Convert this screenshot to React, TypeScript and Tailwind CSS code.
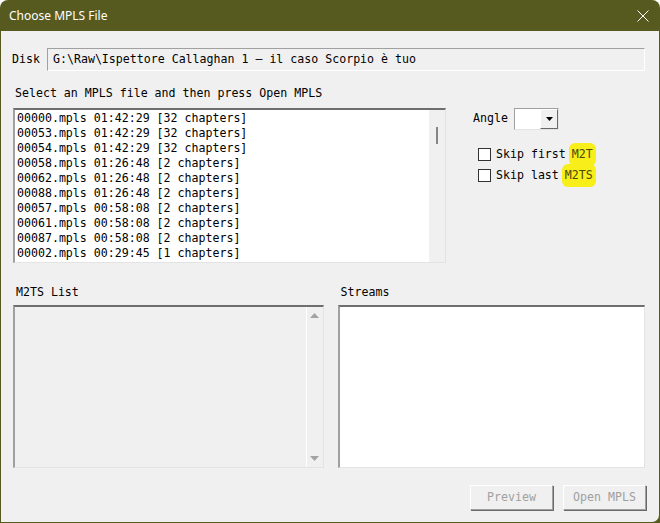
import React from 'react';

const mono = { fontFamily: '"DejaVu Sans Mono", monospace' };

const files = [
  '00000.mpls 01:42:29 [32 chapters]',
  '00053.mpls 01:42:29 [32 chapters]',
  '00054.mpls 01:42:29 [32 chapters]',
  '00058.mpls 01:26:48 [2 chapters]',
  '00062.mpls 01:26:48 [2 chapters]',
  '00088.mpls 01:26:48 [2 chapters]',
  '00057.mpls 00:58:08 [2 chapters]',
  '00061.mpls 00:58:08 [2 chapters]',
  '00087.mpls 00:58:08 [2 chapters]',
  '00002.mpls 00:29:45 [1 chapters]',
];

const Highlight: React.FC<{ children: React.ReactNode }> = ({ children }) => (
  <span className="bg-[#f7ee1a] text-[#4a4a0a] rounded-[6px] pl-[3px] pr-[3px] py-[3px] -ml-[4px]">{children}</span>
);

const Checkbox: React.FC<{ label: string; mark: string }> = ({ label, mark }) => (
  <div className="flex items-center h-[21px]">
    <div className="w-[13px] h-[13px] bg-white border border-[#333333] mr-[5px]" />
    <span className="whitespace-pre">{label + ' '}</span>
    <Highlight>{mark}</Highlight>
  </div>
);

const Button: React.FC<{ label: string }> = ({ label }) => (
  <div className="w-[83px] h-[25px] flex items-center justify-center border border-t-white border-l-white border-r-[#a0a0a0] border-b-[#a0a0a0] shadow-[1px_1px_0_#696969] text-[#a0a0a0]">
    {label}
  </div>
);

export default function App() {
  return (
    <div className="w-[660px] h-[523px] flex flex-col bg-[#575a1f] text-[11.6px] text-black overflow-hidden rounded-t-[8px]" style={mono}>
      {/* title bar */}
      <div className="h-[31px] flex items-center justify-between pl-[9px] pr-[10px] shrink-0">
        <span className="text-white text-[12px]" style={{ fontFamily: '"Noto Sans", "Open Sans", sans-serif' }}>
          Choose MPLS File
        </span>
        <svg width="12" height="12" viewBox="0 0 12 12" className="mr-[1px]">
          <path d="M0.5 0.5 L11.5 11.5 M11.5 0.5 L0.5 11.5" stroke="#ffffff" strokeWidth="1" />
        </svg>
      </div>

      {/* body */}
      <div className="flex-1 bg-[#f0f0f0] mx-[1px] mb-[1px] rounded-br-[7px] pl-[11px] pr-[14px] flex flex-col">
        <div className="mt-[17px] h-[23px] flex items-center">
          <span className="w-[35px]">Disk</span>
          <div className="flex-1 h-[23px] bg-[#f0f0f0] border border-t-[#a0a0a0] border-l-[#a0a0a0] border-r-white border-b-white flex items-center pl-[5px] whitespace-pre">
            G:\Raw\Ispettore Callaghan 1 – il caso Scorpio è tuo
          </div>
        </div>

        <div className="mt-[15px] ml-[3px] h-[14px] leading-[14px]">Select an MPLS file and then press Open MPLS</div>

        <div className="mt-[8px] flex">
          <div className="ml-[1px] w-[433px] h-[155px] bg-white border-t-2 border-l-2 border-t-[#6e6e6e] border-l-[#a0a0a0] border-r border-b border-r-[#e3e3e3] border-b-[#e3e3e3] flex">
            <div className="flex-1 pl-[2px] pt-[1px] leading-[15px] whitespace-pre">
              {files.map(f => (
                <div key={f}>{f}</div>
              ))}
            </div>
            <div className="w-[16px] bg-[#f0f0f0] relative">
              <div className="absolute left-[7px] top-[17px] w-[2px] h-[17px] bg-[#858585]" />
            </div>
          </div>

          <div className="ml-[27px] flex flex-col">
            <div className="flex items-center h-[22px]">
              <span className="w-[41px]">Angle</span>
              <div className="w-[45px] h-[22px] bg-white border border-t-[#a0a0a0] border-l-[#a0a0a0] border-r-[#e3e3e3] border-b-[#e3e3e3] flex justify-end">
                <div className="w-[18px] h-full bg-[#f0f0f0] border border-t-white border-l-white border-r-[#696969] border-b-[#696969] flex items-center justify-center">
                  <svg width="7" height="4" viewBox="0 0 7 4">
                    <path d="M0 0 H7 L3.5 4 Z" fill="#000" />
                  </svg>
                </div>
              </div>
            </div>
            <div className="mt-[14px] ml-[5px]">
              <Checkbox label="Skip first" mark="M2T" />
              <Checkbox label="Skip last" mark="M2TS" />
            </div>
          </div>
        </div>

        <div className="mt-[22px] flex">
          <div className="ml-[1px] w-[312px]">
            <div className="h-[14px] leading-[14px] pl-[3px]">M2TS List</div>
            <div className="mt-[6px] h-[163px] bg-[#f0f0f0] border-t-2 border-l-2 border-t-[#6e6e6e] border-l-[#a0a0a0] border-r border-b border-r-[#e3e3e3] border-b-[#e3e3e3] flex">
              <div className="flex-1" />
              <div className="w-[17px] border-l border-l-white flex flex-col items-center justify-between py-[6px]">
                <svg width="9" height="5" viewBox="0 0 9 5">
                  <path d="M0 5 L4.5 0 L9 5 Z" fill="#a3a3a3" />
                </svg>
                <svg width="9" height="5" viewBox="0 0 9 5">
                  <path d="M0 0 H9 L4.5 5 Z" fill="#a3a3a3" />
                </svg>
              </div>
            </div>
          </div>
          <div className="ml-[14px] w-[309px]">
            <div className="h-[14px] leading-[14px] pl-[3px]">Streams</div>
            <div className="mt-[6px] h-[163px] bg-white border-t-2 border-l-2 border-t-[#6e6e6e] border-l-[#a0a0a0] border-r border-b border-r-[#e3e3e3] border-b-[#e3e3e3]" />
          </div>
        </div>

        <div className="mt-[17px] flex justify-end gap-[10px] mr-[-1px]">
          <Button label="Preview" />
          <Button label="Open MPLS" />
        </div>
      </div>
    </div>
  );
}
